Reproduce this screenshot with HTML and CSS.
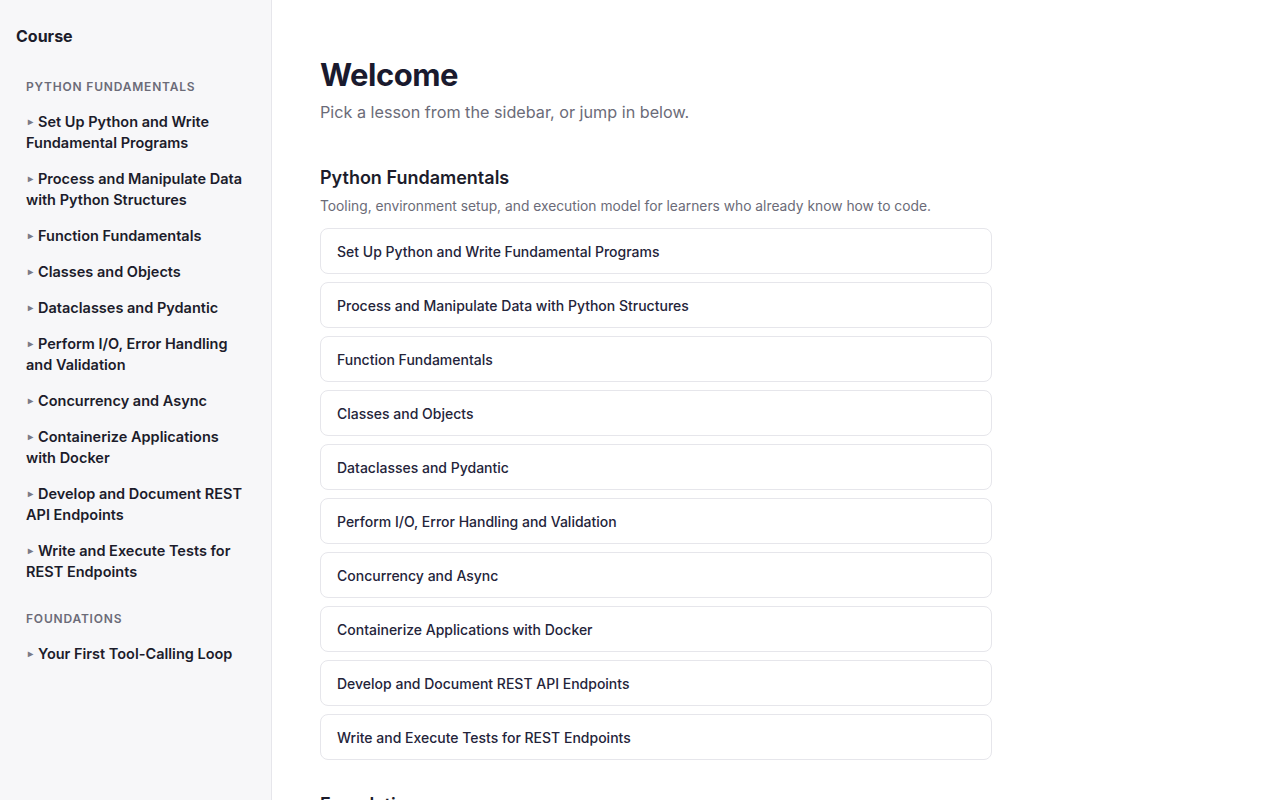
FILE: index.html
```html
<!DOCTYPE html>
<html lang="en">
<head>
    <meta charset="UTF-8">
    <meta name="viewport" content="width=device-width, initial-scale=1.0">
    <title>Course</title>
    <link rel="stylesheet" href="styles.css">
</head>
<body>
    <aside class="sidebar">
        <div class="sidebar-title">Course</div>

        <div class="nav-section">
            <div class="nav-label">Python Fundamentals</div>
            <a class="nav-item" href="#">Set Up Python and Write Fundamental Programs</a>
            <a class="nav-item" href="#">Process and Manipulate Data with Python Structures</a>
            <a class="nav-item" href="#">Function Fundamentals</a>
            <a class="nav-item" href="#">Classes and Objects</a>
            <a class="nav-item" href="#">Dataclasses and Pydantic</a>
            <a class="nav-item" href="#">Perform I/O, Error Handling and Validation</a>
            <a class="nav-item" href="#">Concurrency and Async</a>
            <a class="nav-item" href="#">Containerize Applications with Docker</a>
            <a class="nav-item" href="#">Develop and Document REST API Endpoints</a>
            <a class="nav-item" href="#">Write and Execute Tests for REST Endpoints</a>
        </div>

        <div class="nav-section">
            <div class="nav-label">Foundations</div>
            <a class="nav-item" href="#">Your First Tool-Calling Loop</a>
        </div>
    </aside>

    <main class="content">
        <h1>Welcome</h1>
        <p class="lead">Pick a lesson from the sidebar, or jump in below.</p>

        <section class="module">
            <h2>Python Fundamentals</h2>
            <p class="module-desc">Tooling, environment setup, and execution model for learners who already know how to code.</p>
            <div class="lesson-list">
                <a class="lesson-card" href="#">Set Up Python and Write Fundamental Programs</a>
                <a class="lesson-card" href="#">Process and Manipulate Data with Python Structures</a>
                <a class="lesson-card" href="#">Function Fundamentals</a>
                <a class="lesson-card" href="#">Classes and Objects</a>
                <a class="lesson-card" href="#">Dataclasses and Pydantic</a>
                <a class="lesson-card" href="#">Perform I/O, Error Handling and Validation</a>
                <a class="lesson-card" href="#">Concurrency and Async</a>
                <a class="lesson-card" href="#">Containerize Applications with Docker</a>
                <a class="lesson-card" href="#">Develop and Document REST API Endpoints</a>
                <a class="lesson-card" href="#">Write and Execute Tests for REST Endpoints</a>
            </div>
        </section>

        <section class="module">
            <h2>Foundations</h2>
            <p class="module-desc">Core patterns for building with language models.</p>
            <div class="lesson-list">
                <a class="lesson-card" href="#">Your First Tool-Calling Loop</a>
            </div>
        </section>
    </main>
</body>
</html>
```

FILE: styles.css
```css
* {
    margin: 0;
    padding: 0;
    box-sizing: border-box;
}

body {
    font-family: Inter, "Noto Sans", sans-serif;
    color: #1c1c2b;
    background: #fff;
    display: flex;
    height: 100vh;
    overflow: hidden;
}

a {
    color: inherit;
    text-decoration: none;
}

.sidebar {
    width: 272px;
    flex-shrink: 0;
    background: #f7f7f9;
    border-right: 1px solid #e6e6eb;
    padding: 24px 16px;
    overflow-y: auto;
}

.sidebar-title {
    font-size: 16px;
    font-weight: 700;
    line-height: 24px;
    margin-bottom: 30px;
}

.nav-section {
    display: flex;
    flex-direction: column;
    gap: 3px;
    margin-bottom: 22px;
}

.nav-label {
    font-size: 12px;
    font-weight: 600;
    letter-spacing: 0.8px;
    text-transform: uppercase;
    color: #6b6b78;
    padding: 0 10px;
    line-height: 18px;
    margin-bottom: 6px;
}

.nav-item {
    display: block;
    font-size: 14.5px;
    font-weight: 600;
    line-height: 21px;
    padding: 6px 10px;
    border-radius: 6px;
}

.nav-item::before {
    content: "\25B8";
    display: inline-block;
    font-size: 10px;
    line-height: 0;
    vertical-align: 2px;
    color: #7a7a86;
    margin-left: 2px;
    margin-right: 5px;
}

.nav-item:hover {
    background: #ececf1;
}

.content {
    flex: 1;
    padding: 56px 48px;
    overflow-y: auto;
}

.content > * {
    max-width: 672px;
}

h1 {
    font-size: 31px;
    font-weight: 700;
    line-height: 38px;
    letter-spacing: -0.5px;
    color: #1a1a2e;
}

.lead {
    font-size: 16.2px;
    line-height: 26px;
    color: #6b6b78;
    margin-top: 5px;
}

.module {
    margin-top: 40px;
}

.module + .module {
    margin-top: 32px;
}

.module h2 {
    font-size: 18px;
    font-weight: 600;
    line-height: 26px;
}

.module-desc {
    font-size: 13.8px;
    line-height: 20px;
    color: #6b6b78;
    margin-top: 5px;
}

.lesson-list {
    display: flex;
    flex-direction: column;
    gap: 8px;
    margin-top: 12px;
}

.lesson-card {
    display: flex;
    align-items: center;
    height: 46px;
    padding: 0 16px;
    border: 1px solid #e6e6eb;
    border-radius: 8px;
    font-size: 14px;
    font-weight: 500;
    color: #24243a;
}

.lesson-card:hover {
    border-color: #c8c8d2;
}
```
